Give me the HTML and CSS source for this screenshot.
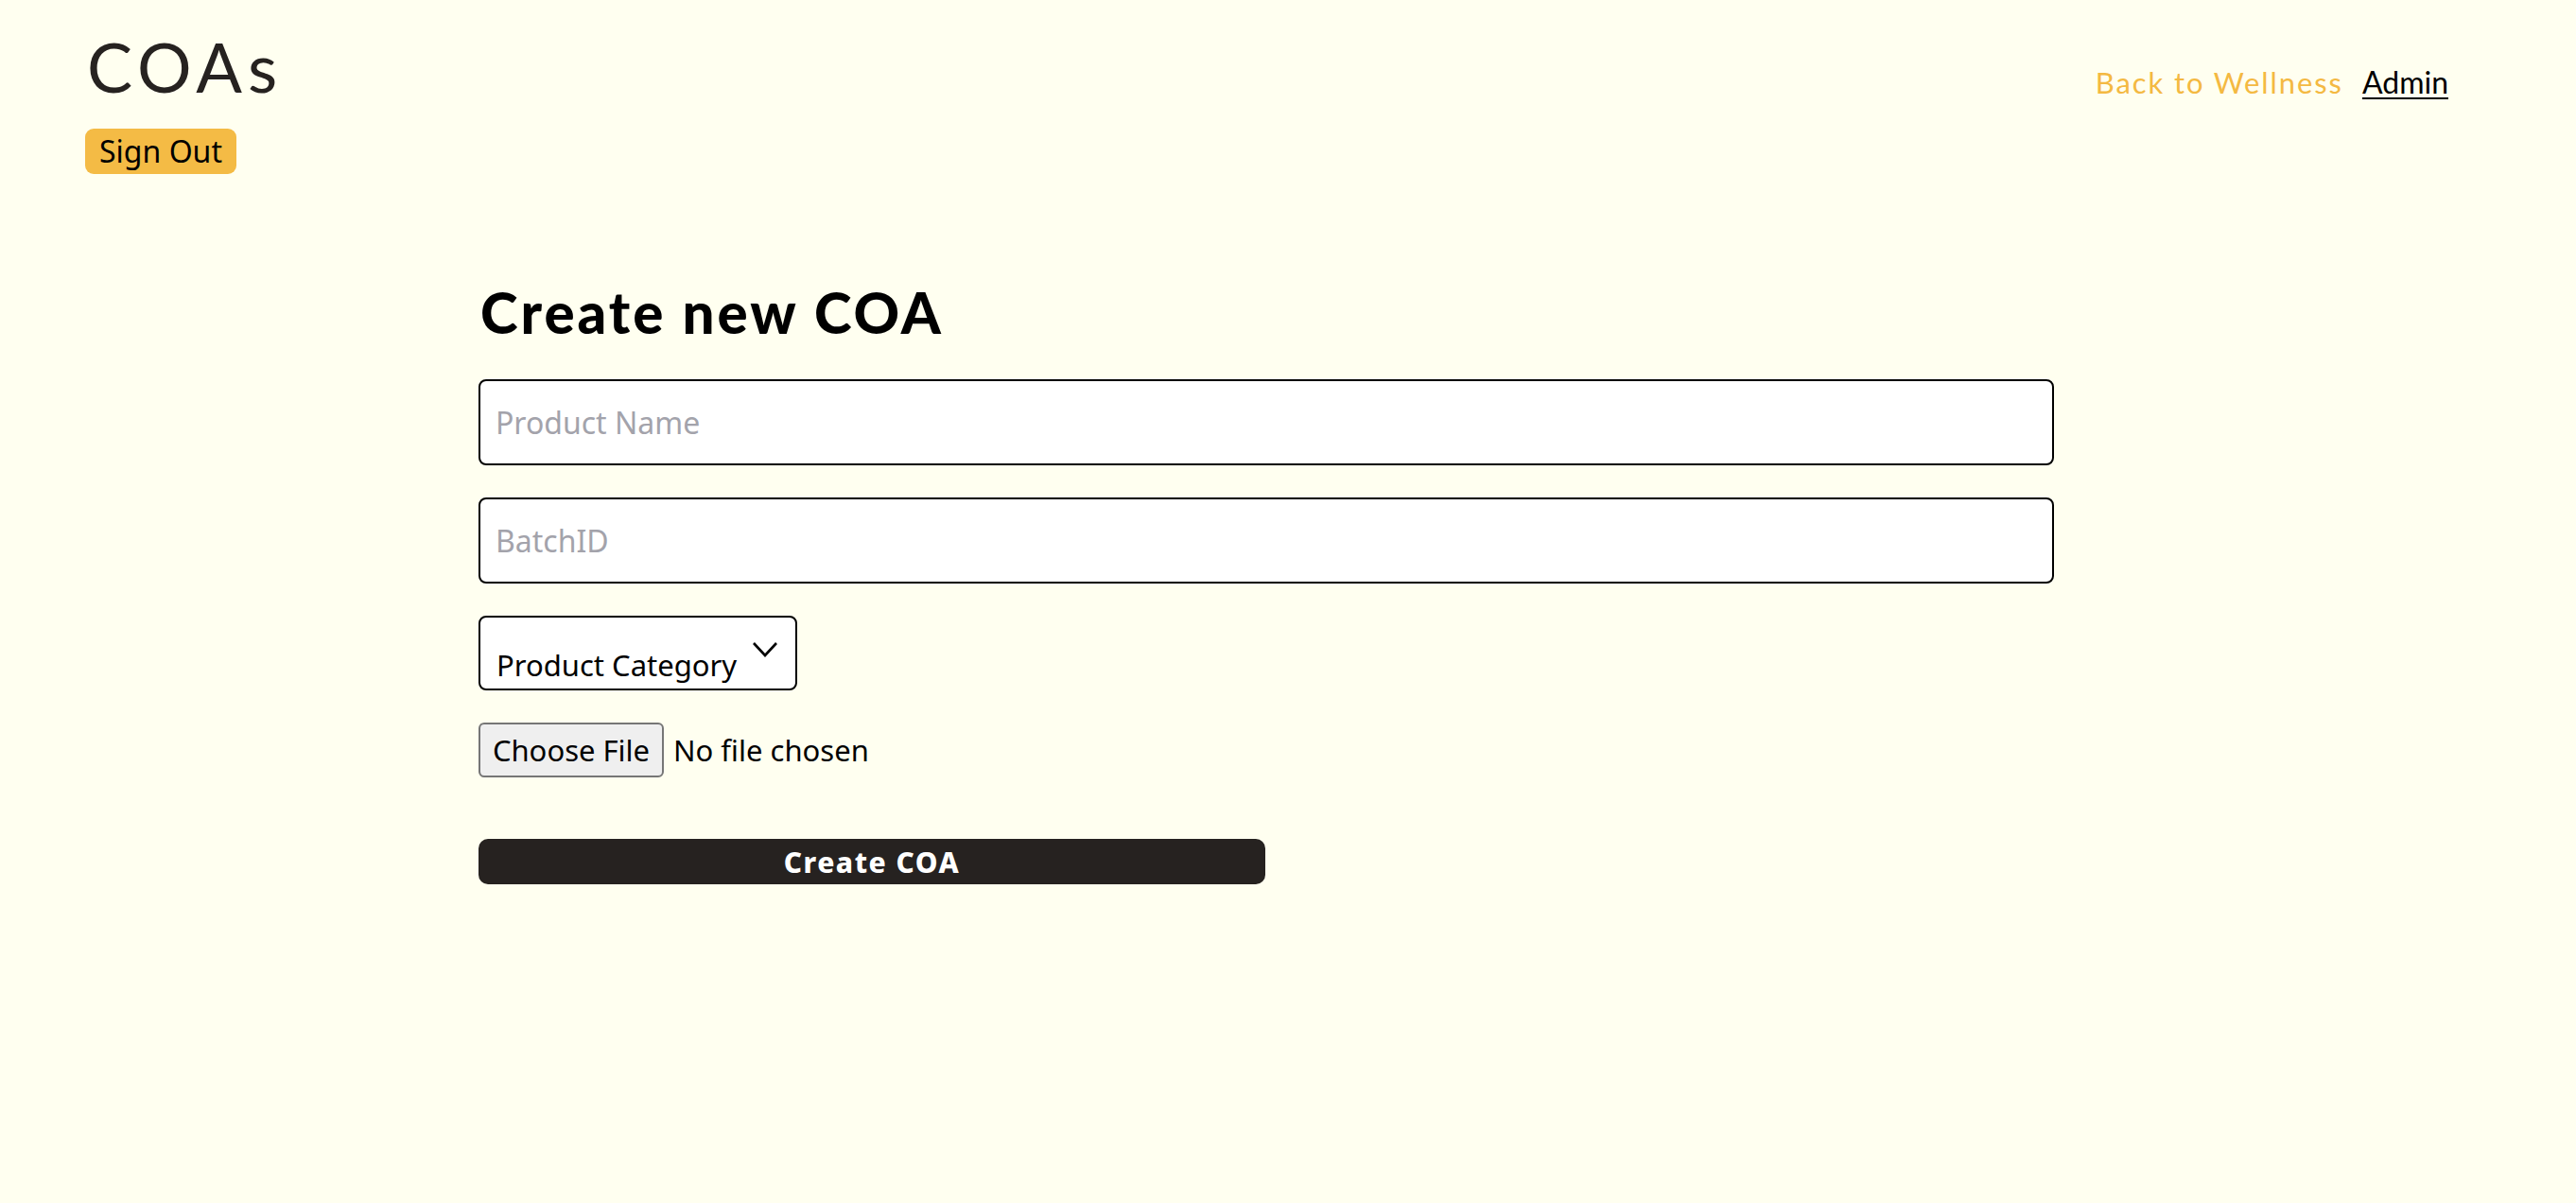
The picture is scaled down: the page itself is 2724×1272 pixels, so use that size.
FILE: index.html
```html
<!DOCTYPE html>
<html lang="en">
<head>
<meta charset="utf-8">
<title>COAs</title>
<link rel="stylesheet" href="styles.css">
</head>
<body>
<header class="site-header">
  <div class="brand">
    <h1 class="brand-title">COAs</h1>
    <button class="signout" type="button">Sign Out</button>
  </div>
  <nav class="nav">
    <a class="nav-back" href="#">Back to Wellness</a>
    <a class="nav-admin" href="#">Admin</a>
  </nav>
</header>
<main class="content">
  <h2 class="form-title">Create new COA</h2>
  <form class="coa-form">
    <input class="text-field" type="text" placeholder="Product Name">
    <input class="text-field" type="text" placeholder="BatchID">
    <div class="select-wrap">
      <select class="select-field">
        <option>Product Category</option>
      </select>
      <svg class="chevron" width="28" height="18" viewBox="0 0 28 18"><path d="M2 2 L14 15 L26 2" fill="none" stroke="#000" stroke-width="2.6"/></svg>
    </div>
    <input class="file-field" type="file">
    <button class="submit" type="button">Create COA</button>
  </form>
</main>
</body>
</html>
```

FILE: styles.css
```css
html, body {
  margin: 0;
  padding: 0;
}
body {
  background: #fffff0;
  color: #000;
  font-family: "Noto Sans", sans-serif;
}
.site-header {
  display: flex;
  justify-content: space-between;
  align-items: flex-start;
  padding: 0 135px 0 90px;
}
.brand {
  display: flex;
  flex-direction: column;
  align-items: flex-start;
}
.brand-title {
  margin: 30px 0 0 2px;
  font-family: Lato, sans-serif;
  font-weight: 400;
  font-size: 72px;
  line-height: 80px;
  letter-spacing: 6px;
  color: #262220;
}
.signout {
  margin-top: 26px;
  height: 48px;
  width: 160px;
  border: none;
  border-radius: 9px;
  background: #f4bb45;
  color: #000;
  font-family: "Noto Sans", sans-serif;
  font-size: 32px;
  padding: 0;
  line-height: 48px;
}
.nav {
  display: flex;
  align-items: baseline;
  gap: 20px;
  margin-top: 67px;
}
.nav-back {
  font-family: Lato, sans-serif;
  font-size: 31px;
  letter-spacing: 1.9px;
  color: #f4b942;
  text-decoration: none;
}
.nav-admin {
  font-family: Lato, sans-serif;
  font-size: 32px;
  color: #000;
  text-decoration: underline;
  text-underline-offset: 4px;
  text-decoration-thickness: 2px;
}
.content {
  margin-left: 506px;
  width: 1666px;
}
.form-title {
  margin: 106px 0 0 2px;
  font-family: Lato, sans-serif;
  font-weight: 900;
  font-size: 60px;
  line-height: 80px;
  letter-spacing: 3px;
}
.coa-form {
  display: flex;
  flex-direction: column;
  align-items: flex-start;
  gap: 34px;
  margin-top: 31px;
}
.text-field {
  box-sizing: border-box;
  width: 100%;
  height: 91px;
  border: 2px solid #000;
  border-radius: 8px;
  background: #fff;
  padding: 0 16px;
  font-family: "Noto Sans", sans-serif;
  font-size: 32px;
  color: #000;
  outline: none;
}
.text-field::placeholder {
  color: #a3a3ab;
}
.select-wrap {
  position: relative;
  width: 337px;
  height: 79px;
}
.select-field {
  appearance: none;
  -webkit-appearance: none;
  box-sizing: border-box;
  width: 100%;
  height: 100%;
  border: 2px solid #000;
  border-radius: 8px;
  background: #fff;
  padding: 24px 0 0 17px;
  font-family: "Noto Sans", sans-serif;
  font-size: 31px;
  color: #000;
}
.chevron {
  position: absolute;
  left: 289px;
  top: 27px;
}
.file-field {
  font-family: "Noto Sans", sans-serif;
  font-size: 31px;
  color: #000;
  height: 58px;
}
.file-field::file-selector-button {
  font-family: "Noto Sans", sans-serif;
  font-size: 31px;
  height: 58px;
  width: 196px;
  margin-right: 10px;
  padding: 0;
  background: #efefef;
  border: 2px solid #767676;
  border-radius: 6px;
  color: #000;
}
.submit {
  margin-top: 31px;
  width: 832px;
  height: 48px;
  border: none;
  border-radius: 10px;
  background: #262220;
  color: #fff;
  font-family: "Noto Sans", sans-serif;
  font-weight: 800;
  font-size: 30px;
  letter-spacing: 1.5px;
  padding: 0;
}
```
